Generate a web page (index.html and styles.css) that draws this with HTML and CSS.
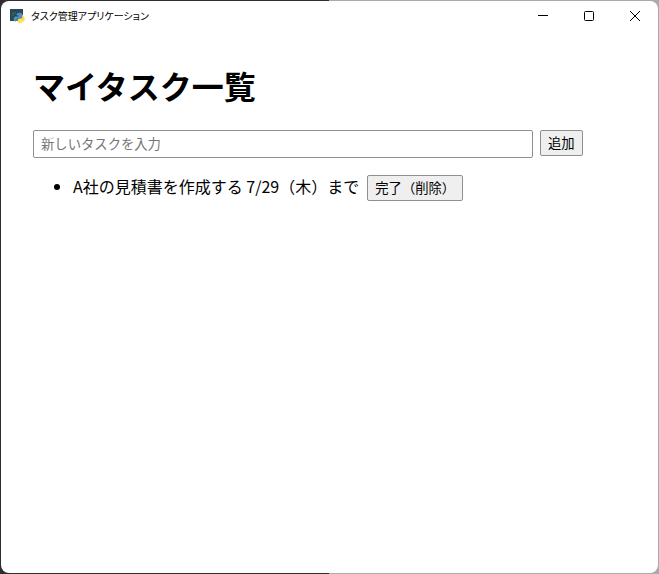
FILE: index.html
```html
<!DOCTYPE html>
<html lang="ja">
<head>
    <meta charset="UTF-8">
    <title>タスク管理アプリケーション</title>
    <link rel="stylesheet" href="styles.css">
</head>
<body>
    <div class="window">
        <header class="title-bar">
            <svg class="app-icon" width="16" height="16" viewBox="0 0 16 16" aria-hidden="true">
                <rect x="1" y="1" width="13" height="12" fill="#2b4a50"/>
                <rect x="1" y="1" width="13" height="2" fill="#2d4668"/>
                <path d="M3 5h4M3 7h2" stroke="#3f7060"/>
                <path d="M8 6q3-2 5 0v3q0 1-1 1H9q-2 0-2 3H6q-2-3 0-4h4V7H8z" fill="#4c8fc9" stroke="#4c8fc9"/>
                <path d="M13 8h1q2 2 1 5h-4v1h2q-2 2-4 0v-2q0-1 1-1h2q2 0 2-3z" fill="#ffdf55" stroke="#ffdf55"/>
            </svg>
            <span class="title">タスク管理アプリケーション</span>
            <div class="window-controls">
                <button type="button" aria-label="最小化">
                    <svg width="12" height="12" viewBox="0 0 12 12"><path d="M1 5.5h10"/></svg>
                </button>
                <button type="button" aria-label="最大化">
                    <svg width="12" height="12" viewBox="0 0 12 12"><rect x="1.5" y="1.5" width="9" height="9" rx="1"/></svg>
                </button>
                <button type="button" aria-label="閉じる">
                    <svg width="12" height="12" viewBox="0 0 12 12"><path d="M1 1l10 10M11 1L1 11"/></svg>
                </button>
            </div>
        </header>
        <main>
            <h1>マイタスク一覧</h1>
            <form class="task-form" id="taskForm">
                <input type="text" id="taskInput" placeholder="新しいタスクを入力" aria-label="新しいタスクを入力">
                <button type="submit">追加</button>
            </form>
            <ul id="taskList">
                <li><span>A社の見積書を作成する 7/29（木）まで</span><button type="button">完了（削除）</button></li>
            </ul>
        </main>
    </div>
    <script>
        const form = document.getElementById('taskForm');
        const input = document.getElementById('taskInput');
        const list = document.getElementById('taskList');

        form.addEventListener('submit', function(event) {
            event.preventDefault();
            if (input.value === '') {
                return;
            }
            const item = document.createElement('li');
            const text = document.createElement('span');
            const button = document.createElement('button');
            text.textContent = input.value;
            button.type = 'button';
            button.textContent = '完了（削除）';
            item.append(text, button);
            list.appendChild(item);
            input.value = '';
        });

        list.addEventListener('click', function(event) {
            if (event.target.tagName === 'BUTTON') {
                event.target.parentElement.remove();
            }
        });
    </script>
</body>
</html>
```
FILE: styles.css
```css
* {
    box-sizing: border-box;
}
body {
    margin: 0;
    padding: 1px;
    min-height: 100vh;
    display: flex;
    background: linear-gradient(to right, #302d31 50%, #aaa 50%);
    color: #000;
    font-family: "Noto Sans CJK JP", sans-serif;
    font-size: 16px;
}
.window {
    flex: 1;
    background: #fff;
    border-radius: 8px;
    overflow: hidden;
}
.title-bar {
    display: flex;
    align-items: center;
    height: 29px;
    padding-left: 8px;
}
.title {
    margin-left: 6px;
    font-size: 10px;
    font-feature-settings: "palt";
}
.window-controls {
    display: flex;
    margin-left: auto;
}
.window-controls button {
    display: flex;
    align-items: center;
    justify-content: center;
    width: 46px;
    height: 28px;
    padding: 0;
    border: none;
    background: none;
}
.window-controls path,
.window-controls rect {
    fill: none;
    stroke: #000;
}
main {
    padding: 31px 32px;
}
h1 {
    margin: 0 0 21px;
    font-size: 32px;
    line-height: 48px;
}
input,
main button {
    border: 1px solid #8f8f8f;
    border-radius: 2px;
    font-family: inherit;
    color: #000;
}
.task-form {
    display: flex;
    align-items: flex-start;
    gap: 7px;
}
input {
    width: 500px;
    height: 28px;
    padding: 0 7px 2px;
    background: #fff;
}
input::placeholder {
    color: #757575;
}
main button {
    height: 26px;
    padding: 0 7px;
    line-height: 24px;
    background: #efefef;
}
ul {
    margin: 16px 0;
    padding-left: 40px;
}
li {
    line-height: 24px;
}
li button {
    margin-left: 8px;
    vertical-align: baseline;
}
```
